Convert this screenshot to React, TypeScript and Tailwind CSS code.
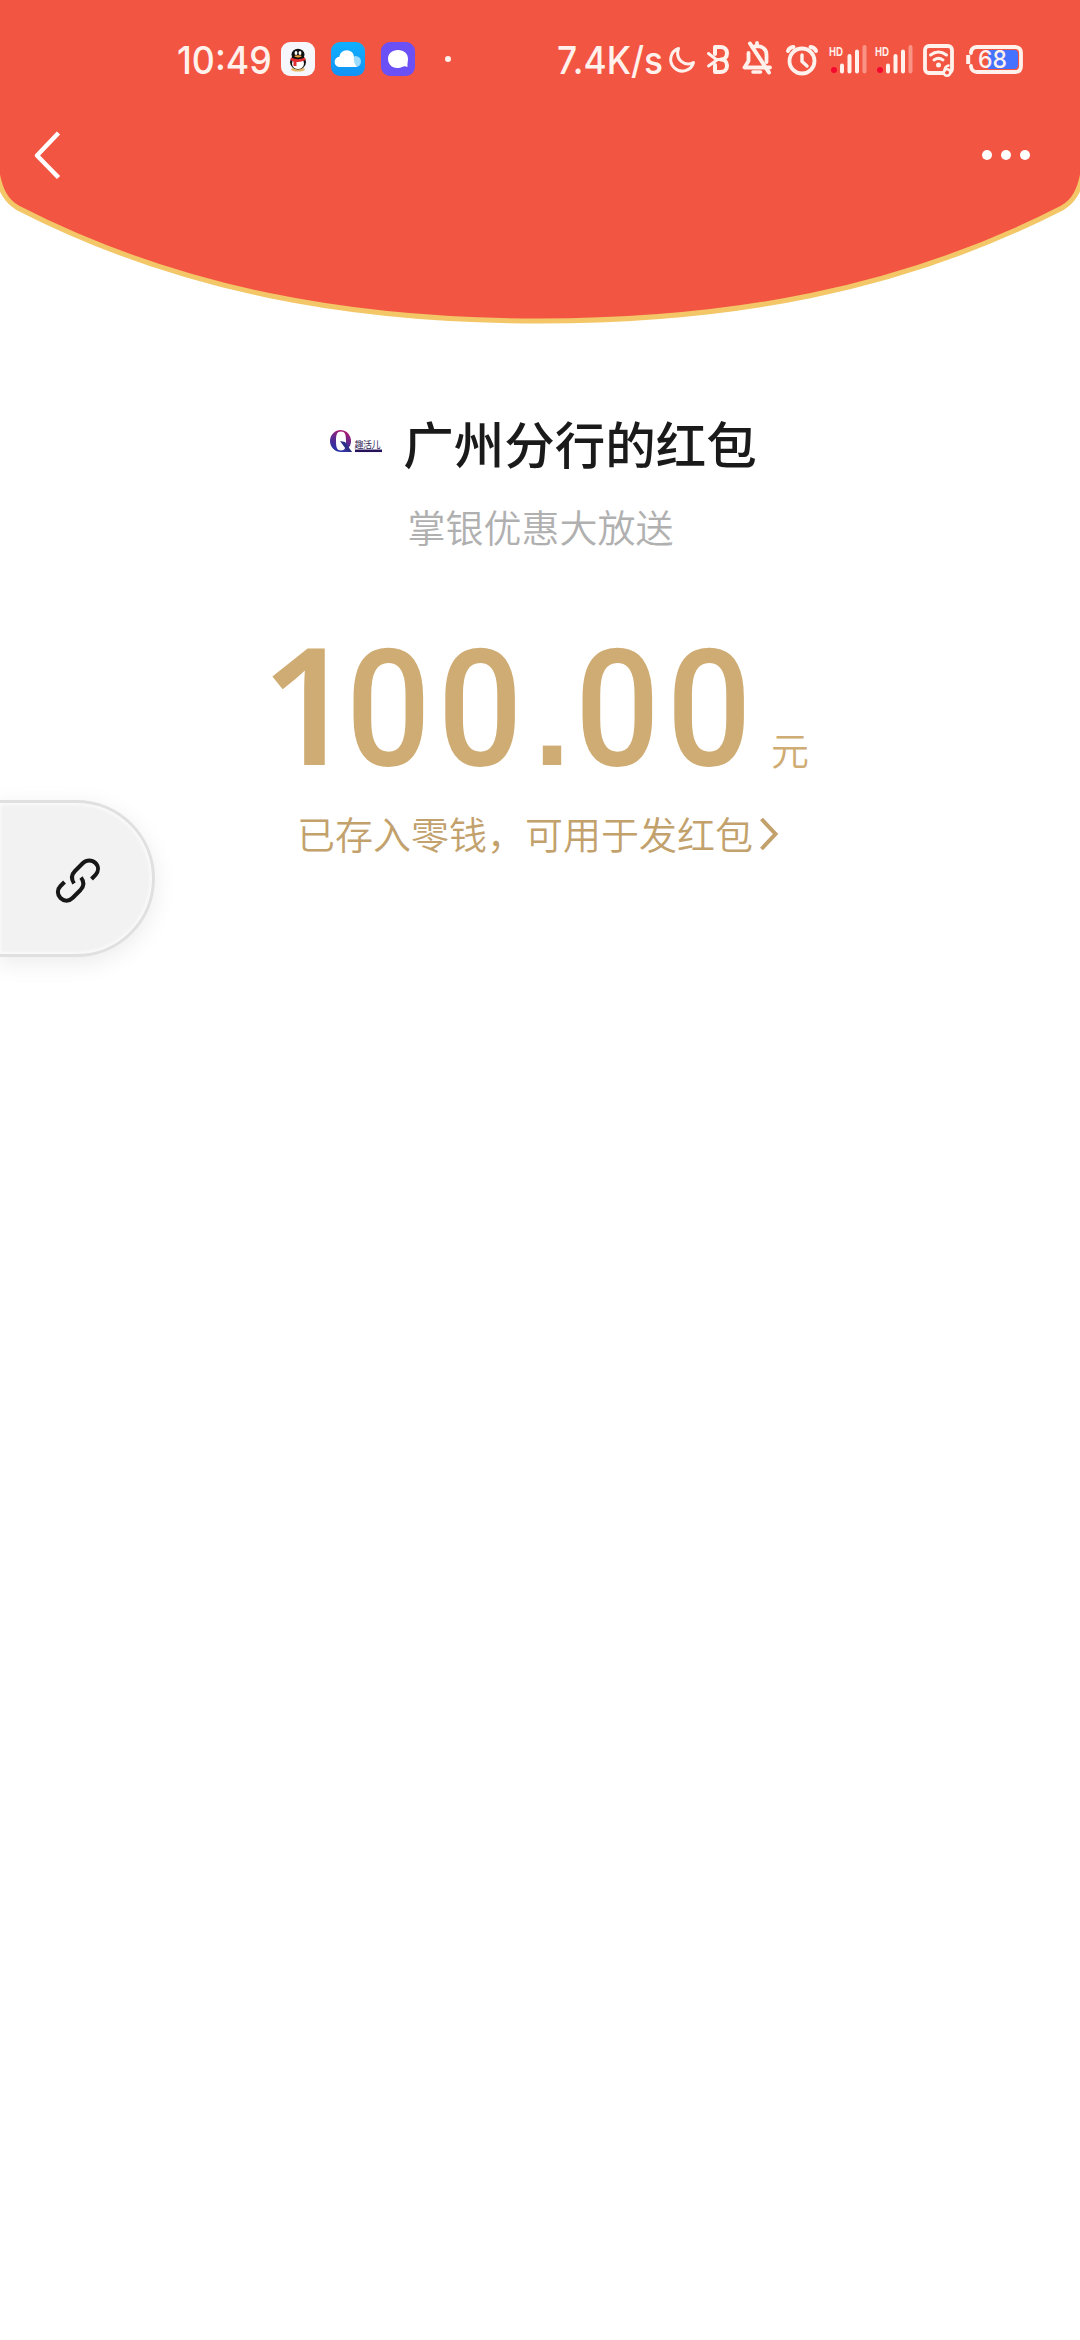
import type { ReactNode } from 'react';

const latinFont = 'font-["Inter","Noto_Sans_CJK_SC",sans-serif]';
const cjkFont = 'font-["Noto_Sans_CJK_SC",sans-serif]';

function StatusIcon({ x, width, children }: { x: number; width: number; children: ReactNode }) {
  return (
    <svg
      className="shrink-0 text-[#fff1ec]"
      width={width}
      height={60}
      viewBox={`${x} 30 ${width} 60`}
      fill="none"
      stroke="currentColor"
      strokeWidth={3}
      strokeLinecap="round"
      strokeLinejoin="round"
    >
      {children}
    </svg>
  );
}

function SignalBars({ x }: { x: number }) {
  return (
    <StatusIcon x={x - 2} width={46}>
      <text
        x={x}
        y={56}
        fontFamily="Liberation Sans, sans-serif"
        fontSize={12.5}
        fontWeight={700}
        textLength={14}
        lengthAdjust="spacingAndGlyphs"
        fill="currentColor"
        stroke="none"
      >
        HD
      </text>
      <circle cx={x + 5} cy={70} r={3} fill="#f5082d" stroke="none" />
      <path d={`M${x + 13} 65.5v6M${x + 20.5} 56v15.5M${x + 28} 51.5v20`} strokeWidth={4} />
      <path d={`M${x + 35.5} 47v24.5`} strokeWidth={4} opacity={0.4} />
    </StatusIcon>
  );
}

function StatusBar() {
  return (
    <div className={`flex h-[60px] items-center ${latinFont}`}>
      <div className="ml-[177px] w-[102px] text-[38px] leading-[58px] font-medium text-[#fff1ec]">
        <span className="inline-block origin-left scale-x-[0.94]">10:49</span>
      </div>

      {/* Notification icons */}
      <StatusIcon x={279} width={44}>
        <rect x={281} y={42} width={34} height={34} rx={9} fill="#f6f7fc" stroke="none" />
        <g stroke="none">
          <ellipse cx={298} cy={69.5} rx={7} ry={2} fill="#e5b96a" />
          <ellipse cx={298} cy={62} rx={8} ry={7.5} fill="#111" />
          <ellipse cx={298} cy={63.5} rx={6} ry={5.5} fill="#fff" />
          <ellipse cx={298} cy={54.5} rx={6.5} ry={5.8} fill="#111" />
          <path d="M291 57.5q7 3.5 14 0l.5 2.5q-5 2.5-9 2v4h-3v-4.5l-3-1.5z" fill="#e32d32" />
          <ellipse cx={296} cy={53} rx={1.4} ry={2} fill="#fff" />
          <ellipse cx={300} cy={53} rx={1.4} ry={2} fill="#fff" />
          <ellipse cx={298} cy={56.3} rx={3.5} ry={1.1} fill="#e9a23b" />
        </g>
      </StatusIcon>
      <StatusIcon x={323} width={50}>
        <defs>
          <linearGradient id="cloud" x1="0" y1="0" x2="0" y2="1">
            <stop offset="0" stopColor="#0fb0ff" />
            <stop offset="1" stopColor="#1292f5" />
          </linearGradient>
        </defs>
        <rect x={331} y={42} width={34} height={34} rx={9} fill="url(#cloud)" stroke="none" />
        <circle cx={355.5} cy={61.5} r={5.5} fill="#9ddcff" stroke="none" />
        <path
          d="M340 67a5 5 0 0 1-.6-10.2 7.5 7.5 0 0 1 12-5c2.5 2 2.6 4.2 2.4 7.2 0 3 1 5 3 8z"
          fill="#fff"
          stroke="none"
        />
      </StatusIcon>
      <StatusIcon x={373} width={50}>
        <rect x={381} y={42} width={34} height={34} rx={9} fill="#6b50f6" stroke="none" />
        <path
          d="M398 50c6 0 10 3.6 10 8.8 0 2.5-.7 4.2-.5 8.2-2-.7-3-.9-4.5-.2-9 4-15-1.8-15-8 0-5.2 4-8.8 10-8.8z"
          fill="#fff"
          stroke="none"
        />
      </StatusIcon>
      <StatusIcon x={423} width={50}>
        <circle cx={448} cy={59} r={3} fill="currentColor" stroke="none" />
      </StatusIcon>

      {/* System icons */}
      <div className="ml-[84px] w-[105px] whitespace-nowrap text-[38px] leading-[58px] font-medium text-[#fff1ec]">
        <span className="inline-block origin-left scale-x-[0.93]">7.4K/s</span>
      </div>
      <StatusIcon x={662} width={38}>
        <path d="M678.5 48.5A11.6 11.6 0 1 0 693.5 62.5C685 67 674.5 59.5 678.5 48.5Z" />
      </StatusIcon>
      <StatusIcon x={700} width={38}>
        <path d="M708.5 53.5l8.5 6.5-8.5 6M717 59.5h7" />
        <path
          d="M715 54v-7h5.5c4 0 6.5 2.6 6.5 6.3s-2.5 6.2-6 6.2c3.5 0 6 2.3 6 6.2s-2.5 6.3-6.5 6.3H715V65"
          strokeWidth={4}
        />
      </StatusIcon>
      <StatusIcon x={738} width={42}>
        <path
          d="M748.5 53v8l-4 6.5h25.5M766.5 62V55c0-5.5-3.5-8.5-9.5-8.8-2 0-3 .3-4.5 1M757 46v-3"
          strokeWidth={3.8}
        />
        <path d="M750 43.5l19 29" strokeWidth={4} />
        <path d="M753 72h7.5" strokeWidth={3.6} />
      </StatusIcon>
      <StatusIcon x={780} width={46}>
        <circle cx={802} cy={61} r={12.5} strokeWidth={3.8} />
        <path d="M802 55v6.5l5 4.5" strokeWidth={3.4} />
        <path d="M788 51q1-3.500 5.500-4M816 51q-1-3.500-5.500-4" strokeWidth={4} />
      </StatusIcon>
      <div className="w-px" />
      <SignalBars x={829} />
      <SignalBars x={875} />
      <StatusIcon x={919} width={42}>
        <rect x={925} y={46} width={27} height={27} rx={4} strokeWidth={3.8} />
        <path d="M930.5 55q8-6 16 0M934 60q4.5-3.2 9 0" />
        <circle cx={938.5} cy={65} r={2.5} fill="currentColor" stroke="none" />
        <circle cx={947} cy={72.5} r={3.3} fill="#f35543" strokeWidth={2.5} />
        <path d="M944.5 71q0-4.5 4-5.500" strokeWidth={2.5} />
      </StatusIcon>
      <StatusIcon x={961} width={70}>
        <path d="M968.2 55v9" strokeWidth={4} strokeLinecap="butt" />
        <path d="M971 53v-1q1-5 6-5h38q6 0 6 6v13q0 6-6 6h-38q-5 0-6-5v-1" strokeWidth={3.8} />
        <path d="M988 50h26q4 0 4 4v11q0 4-4 4h-26z" fill="#4572ff" stroke="none" />
        <text
          x={978}
          y={68}
          fontFamily="Inter, sans-serif"
          fontSize={24}
          fontWeight={500}
          textLength={29}
          lengthAdjust="spacingAndGlyphs"
          fill="currentColor"
          stroke="none"
        >
          68
        </text>
      </StatusIcon>
    </div>
  );
}

function NavBar() {
  return (
    <div className="flex h-[88px] items-center justify-between pr-[50px] pl-[33px] pt-[42px]">
      <button className="shrink-0" aria-label="返回">
        <svg className="block" width={28} height={50} viewBox="0 0 28 50" fill="none" stroke="#fff" strokeWidth={4.5}>
          <path d="M25.5 3L4 25.5l21.5 22" strokeLinejoin="round" />
        </svg>
      </button>
      <button className="flex gap-[9px]" aria-label="更多">
        <span className="size-[10px] rounded-full bg-white" />
        <span className="size-[10px] rounded-full bg-white" />
        <span className="size-[10px] rounded-full bg-white" />
      </button>
    </div>
  );
}

function Header() {
  return (
    <header className="relative h-[330px]">
      {/* Envelope flap with a gold edge */}
      <svg className="absolute inset-0" width={1080} height={330} viewBox="0 0 1080 330">
        <path
          d="M-3 -10V172C0 190 6 201 18 208C178 290 350 321 540 321S902 290 1062 208C1074 201 1080 190 1083 172V-10Z"
          fill="#f35543"
          stroke="#f3c767"
          strokeWidth={5}
        />
      </svg>
      <div className="relative pt-[30px]">
        <StatusBar />
        <NavBar />
      </div>
    </header>
  );
}

function SenderLogo() {
  return (
    <svg className="shrink-0" width={54} height={28} viewBox="328 428 54 28">
      <defs>
        <linearGradient id="logoQ" x1="0.7" y1="0" x2="0.3" y2="1">
          <stop offset="0" stopColor="#b3176e" />
          <stop offset="0.5" stopColor="#5b2a90" />
          <stop offset="1" stopColor="#1f35a8" />
        </linearGradient>
      </defs>
      <path
        d="M340 430a11 11 0 0 0 0 22h11l-4-3.500A11 11 0 0 0 340 430zm0 1.500c4 0 5 3 5 9.500s-1 9.500-5 9.500-5-3-5-9.500 1-9.500 5-9.500z"
        fill="url(#logoQ)"
        fillRule="evenodd"
      />
      <path d="M339 441l5 1 7 10h-4z" fill="#2a2f87" />
      <text x={353.5} y={447.5} fontFamily="Noto Sans CJK SC, sans-serif" fontSize={9} textLength={26} fill="#2b1b56">
        趣活儿
      </text>
      <path d="M354 450.8h27" stroke="#26125a" strokeWidth={2.5} />
    </svg>
  );
}

function Amount() {
  return (
    <div className="whitespace-nowrap text-[163px] leading-[200px]">
      <span className="inline-block w-[96px] pl-[11px] font-['Noto_Sans',sans-serif] font-semibold">1</span>
      <span className="inline-block w-[183px] origin-left scale-x-[0.915] font-[Roboto,sans-serif] font-medium tracking-[7.7px]">
        00
      </span>
      <span className="inline-block w-[46px] text-center font-['Liberation_Sans',sans-serif] text-[130px] leading-[200px] font-bold">
        .
      </span>
      <span className="inline-block w-[183px] origin-left scale-x-[0.915] font-[Roboto,sans-serif] font-medium tracking-[7.7px]">
        00
      </span>
    </div>
  );
}

function PacketDetail() {
  return (
    <main className={`flex flex-col items-center ${cjkFont}`}>
      <div className="mt-[76px] mr-[-6px] flex h-[72px] items-center">
        <SenderLogo />
        <h1 className="ml-[20px] text-[50.500px] leading-[72px] font-medium text-[#1a1a1a]">广州分行的红包</h1>
      </div>
      <p className="mt-[20px] mr-[-1px] text-[38px] leading-[56px] font-[350] text-[#b0b0b0]">掌银优惠大放送</p>

      <div className="mt-[40px] flex h-[200px] w-[580px] items-baseline text-[#cfac73]">
        <div className="w-[521px]">
          <Amount />
        </div>
        <span className="text-[38px] leading-[56px] font-[350]">元</span>
      </div>

      <button className="mt-[11px] mr-[4px] flex items-center text-[38px] leading-[56px] font-[350] text-[#c2a16c]">
        <span>已存入零钱，可用于发红包</span>
        <svg className="mt-[2px] ml-[6px]" width={20} height={34} viewBox="0 0 20 34" fill="none" stroke="#c2a16c" strokeWidth={4}>
          <path d="M2.5 2L16.5 17 2.5 32" />
        </svg>
      </button>
    </main>
  );
}

// Floating bubble docked to the left edge of the screen
function LinkBubble() {
  return (
    <div className="absolute top-[800px] left-[-4px] flex h-[157px] w-[159px] items-center rounded-r-full border-[3px] border-[#e0e0e0] bg-[#f2f2f2] pt-[4px] pl-[54px] shadow-[0_6px_24px_rgba(0,0,0,0.08),inset_0_0_3px_2px_#fafafa]">
      <svg
        width={50}
        height={50}
        viewBox="53 856 50 50"
        fill="none"
        stroke="#171717"
        strokeWidth={4}
      >
        <path d="M74 883.5q-4.5-7 1-12.5l8-8c3.5-3.5 9-3.5 12.5 0s3 8.5 0 12l-4 4" />
        <path d="M81 877.5q5 6.5-.5 12.5l-8 8c-3.5 3.5-8.5 3.5-12 0s-3.5-8.5 0-12l4-4" />
      </svg>
    </div>
  );
}

export default function App() {
  return (
    <div className="relative h-[2340px] w-[1080px] overflow-hidden bg-white">
      <Header />
      <PacketDetail />
      <LinkBubble />
    </div>
  );
}
